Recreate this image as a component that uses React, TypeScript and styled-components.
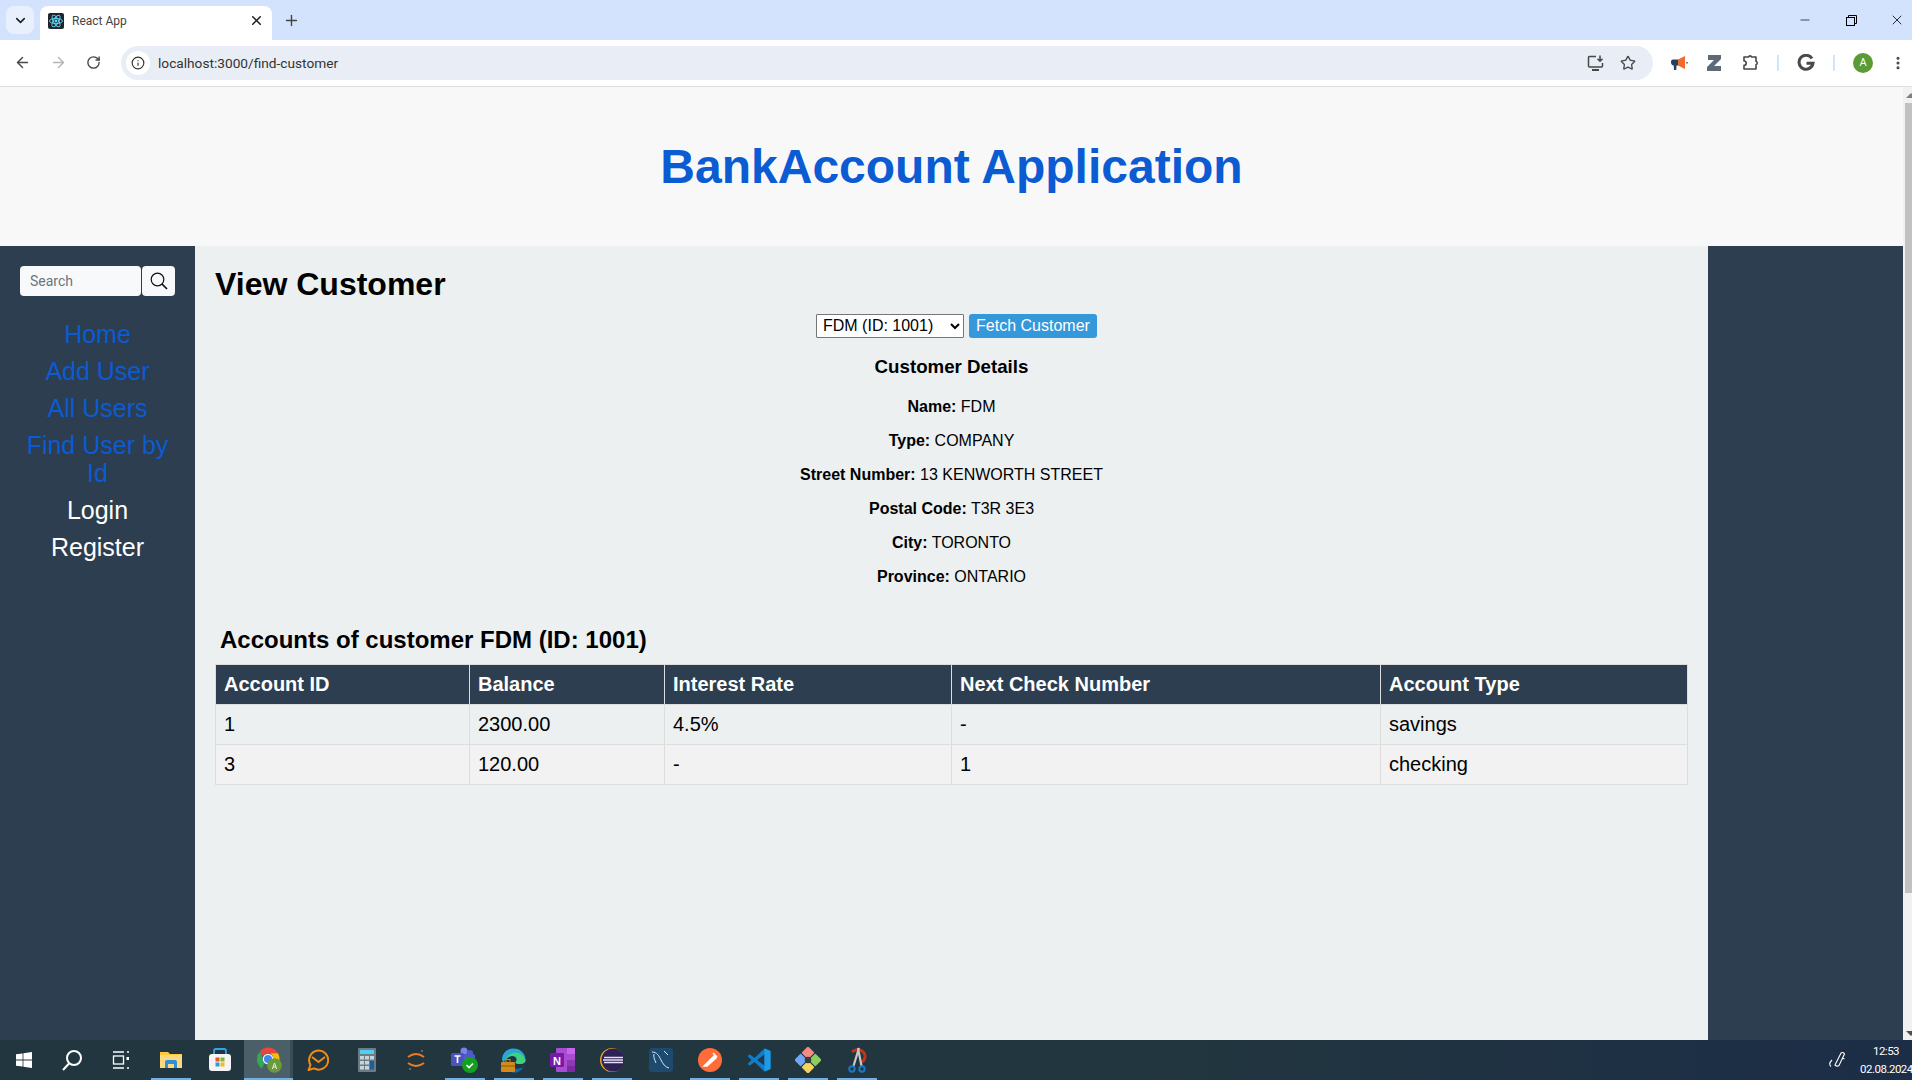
import React from "react";
import styled, { createGlobalStyle } from "styled-components";
import { ArrowLeft, ArrowRight, RotateCw, Info, Star, X, Plus, ChevronDown, EllipsisVertical, Minus } from "lucide-react";

const Global = createGlobalStyle`
  html, body { margin: 0; padding: 0; height: 100%; overflow: hidden; }
  body { font-family: "Liberation Sans", Arial, sans-serif; }
  * { box-sizing: border-box; }
`;

const Screen = styled.div`
  width: 1912px; height: 1080px; display: flex; flex-direction: column; overflow: hidden;
`;
const TabStrip = styled.div`
  height: 40px; background: #d3e3fd; display: flex; align-items: flex-start; position: relative; flex: none;
`;
const TabSearch = styled.div`
  width: 28px; height: 28px; margin: 6px 0 0 6px; border-radius: 8px; background: #e8f0fe;
  display: flex; align-items: center; justify-content: center; color: #1f1f1f;
`;
const Tab = styled.div`
  width: 232px; height: 34px; margin: 6px 0 0 6px; background: #fff; border-radius: 8px 8px 0 0;
  display: flex; align-items: center; padding: 0 8px 5px 8px; gap: 8px;
`;
const TabTitle = styled.span`
  flex: 1; font-family: "Roboto", "Liberation Sans", sans-serif; font-size: 12px; color: #444;
`;
const NewTab = styled.div`
  margin: 10px 0 0 9px; width: 20px; height: 20px; color: #444; display: flex; align-items: center; justify-content: center;
`;
const WindowControls = styled.div`
  margin-left: auto; display: flex; height: 40px; align-items: center; padding-right: 7px; color: #000; gap: 32px;
`;
const MinimizeIcon = styled(Minus)`
  margin-right: 2px;
`;
const Toolbar = styled.div`
  height: 47px; flex: none; background: #fff; border-bottom: 1px solid #e0e0e0; display: flex; align-items: center; padding: 0 0 1px 13px;
`;
const ToolIcon = styled.div<{ $gap?: number; $lead?: number; $w?: number }>`
  display: flex; align-items: center; justify-content: center; width: ${p => p.$w ?? 18}px;
  margin-left: ${p => p.$lead ?? 0}px; margin-right: ${p => p.$gap ?? 0}px; color: #474747; flex: none;
`;
const Omnibox = styled.div`
  margin-left: 19px; width: 1532px; height: 34px; border-radius: 17px; background: #e9eef6;
  display: flex; align-items: center; padding: 0 16px 0 5px; flex: none;
`;
const InfoBadge = styled.div`
  width: 24px; height: 24px; border-radius: 50%; background: #fff; display: flex; align-items: center; justify-content: center; color: #333; margin-right: 8px;
`;
const Url = styled.span`
  flex: 1; font: 13.7px "Roboto", "Liberation Sans", sans-serif; color: #333;
`;
const Divider = styled.div`
  width: 2px; height: 16px; background: #d3e3fd; margin: 0 18px; flex: none;
`;
const Avatar = styled.div`
  width: 20px; height: 20px; border-radius: 50%; background: #5b9a34; color: #fff; font: 11px "Roboto", sans-serif;
  display: flex; align-items: center; justify-content: center; flex: none;
`;
const Viewport = styled.div`
  flex: 1; display: flex; min-height: 0;
`;
const PageArea = styled.div`
  flex: 1; display: flex; flex-direction: column; min-width: 0;
`;
const Scrollbar = styled.div`
  width: 9px; background: #f1f1f1; display: flex; flex-direction: column; align-items: flex-end; position: relative; overflow: hidden;
`;
const ScrollThumb = styled.div`
  width: 7px; height: 790px; margin-top: 16px; background: #c1c1c1;
`;
const ScrollArrow = styled.div<{ $down?: boolean }>`
  position: absolute; ${p => (p.$down ? "bottom: 4px;" : "top: 6px;")} left: 3px; width: 0; height: 0;
  border-left: 5px solid transparent; border-right: 5px solid transparent;
  ${p => (p.$down ? "border-top: 5px solid #505050;" : "border-bottom: 5px solid #808080;")}
`;
const Header = styled.header`
  height: 159px; flex: none; background: #f8f8f8; display: flex; align-items: center; justify-content: center;
`;
const Title = styled.h1`
  margin: 0 0 1px; font-size: 48px; font-weight: 700; color: #0b5bd3;
`;
const Columns = styled.div`
  flex: 1; display: flex; min-height: 0;
`;
const Sidebar = styled.aside`
  width: 195px; flex: none; background: #2c3e50; padding: 20px 20px 0; display: flex; flex-direction: column;
`;
const SearchRow = styled.div`
  display: flex; gap: 1px; height: 30px; margin-bottom: 24px;
`;
const SearchInput = styled.div`
  width: 121px; height: 30px; background: #f8f9fa; border-radius: 4px; color: #6c757d;
  display: flex; align-items: center; padding-left: 10px; font-family: "Roboto", sans-serif; font-size: 14px;
`;
const SearchButton = styled.div`
  width: 33px; height: 30px; background: #f8f9fa; border-radius: 4px; display: flex; align-items: center; justify-content: center; color: #111;
`;
const NavLink = styled.a<{ $light?: boolean }>`
  display: block; text-align: center; font-size: 25px; line-height: 28px; margin-bottom: 9px;
  color: ${p => (p.$light ? "#fff" : "#0b5bd3")}; text-decoration: none;
  &:last-child { margin-bottom: 0; }
`;
const Main = styled.main`
  width: 1513px; flex: none; background: #ecf0f1; padding: 20px 20px 0 20px;
`;
const Heading = styled.h2`
  margin: 0 0 11px; font-size: 32px; line-height: 37px; font-weight: 700; color: #000;
`;
const FetchRow = styled.div`
  display: flex; justify-content: center; align-items: center; gap: 5px; height: 24px; margin-left: 10px;
`;
const CustomerSelect = styled.select`
  width: 148px; height: 24px; font: 16px "Liberation Sans", sans-serif; color: #000; background: #fff;
  border: 1px solid #767676; border-radius: 1px; padding: 0 0 1px 2px;
`;
const FetchButton = styled.button`
  height: 24px; width: 128px; border: 0; padding: 0; border-radius: 3px; background: #3498db; color: #fff; font: 16px "Liberation Sans", sans-serif;
`;
const Details = styled.section`
  text-align: center; width: 1473px;
`;
const DetailsTitle = styled.h3`
  margin: 18px 0 0; font-size: 18.72px; line-height: 21px; color: #000;
`;
const DetailLine = styled.p`
  margin: 16px 0 0; font-size: 16px; line-height: 18px; color: #000;
  &:first-of-type { margin-top: 21px; }
`;
const AccountsTitle = styled.h3`
  margin: 40px 0 10px 5px; font-size: 24px; line-height: 28px; color: #000;
`;
const Table = styled.table`
  width: 1472px; border-collapse: collapse; table-layout: fixed; font-size: 20px;
`;
const Th = styled.th<{ $w: number }>`
  width: ${p => p.$w}px; height: 40px; background: #2c3e50; color: #fff; text-align: left; padding: 0 8px; font-weight: 700; border: 1px solid #ddd;
`;
const Td = styled.td`
  height: 40px; padding: 0 8px; border: 1px solid #ddd; color: #000;
`;
const Tr = styled.tr<{ $alt?: boolean }>`
  background: ${p => (p.$alt ? "#f2f2f2" : "transparent")};
`;
const RightRail = styled.div`
  flex: 1; background: #2c3e50;
`;
const Taskbar = styled.footer`
  height: 40px; flex: none; display: flex;
  background: linear-gradient(90deg, #22363f 0%, #22363f 60%, #1c2d47 100%);
`;
const TaskItem = styled.div<{ $w?: number; $active?: boolean; $open?: boolean }>`
  width: ${p => p.$w ?? 49}px; height: 40px; flex: none; display: flex; align-items: center; justify-content: center; position: relative;
  background: ${p => (p.$active ? "#4a5f68" : "transparent")};
  box-shadow: ${p => (p.$active ? "inset -3px 0 0 #3a4c55" : "none")};
  &::after {
    content: ""; display: ${p => (p.$open ? "block" : "none")}; position: absolute;
    left: ${p => (p.$active ? 0 : 5)}px; right: ${p => (p.$active ? 0 : 4)}px; bottom: 0; height: 2px; background: #6fb1e6;
  }
`;
const Tray = styled.div`
  margin-left: auto; display: flex; align-items: center; gap: 14px; color: #fff; white-space: nowrap;
`;
const Clock = styled.div`
  width: 52px; font: 11.5px/18px "Roboto", "Open Sans", sans-serif; letter-spacing: -0.5px; color: #fff; text-align: center;
`;

const ReactLogo = () => (
  <svg width="16" height="16" viewBox="0 0 16 16"><rect width="16" height="16" rx="2" fill="#20232a" /><g fill="none" stroke="#61dafb" strokeWidth="0.9"><ellipse cx="8" cy="8" rx="6.5" ry="2.6" /><ellipse cx="8" cy="8" rx="6.5" ry="2.6" transform="rotate(60 8 8)" /><ellipse cx="8" cy="8" rx="6.5" ry="2.6" transform="rotate(120 8 8)" /></g><circle cx="8" cy="8" r="1.4" fill="#61dafb" /></svg>
);
const RestoreIcon = () => (
  <svg width="11" height="11" viewBox="0 0 11 11" fill="none" stroke="#000" strokeWidth="1"><rect x="0.500" y="2.500" width="8" height="8" /><path d="M2.500 2.500V.5h8v8H8.500" /></svg>
);
const InstallIcon = () => (
  <svg width="17" height="16" viewBox="0 0 17 16" fill="none" stroke="#474747" strokeWidth="1.500"><path d="M9 1.500H2.500a1 1 0 0 0-1 1v8.500a1 1 0 0 0 1 1h12a1 1 0 0 0 1-1V8" /><path d="M5 15h7" strokeWidth="2" /><path d="M13 .5v5.500M10.500 3.800 13 6.300l2.500-2.500" /></svg>
);
const Megaphone = () => (
  <svg width="18" height="18" viewBox="0 0 18 18"><path d="M1 7.500c0-1.200 1-2 2-2h5v6H6.500L6.300 16H4l-.3-4.500C2 11.500 1 10 1 8.500z" fill="#24405f" /><path d="M8 5.500 15 2v13l-7-3.500z" fill="#f4692e" /><rect x="16" y="8" width="2" height="1.500" fill="#777" /></svg>
);
const ZExt = () => (
  <svg width="14" height="16" viewBox="0 0 14 16"><path d="M1 0h13v4l-7 7h7v5H0v-4l7-7H1z" fill="#5c6b77" /></svg>
);
const PuzzleIcon = () => (
  <svg width="18" height="18" viewBox="0 0 18 18" fill="none" stroke="#474747" strokeWidth="1.600"><path d="M3 3h4.500a1.700 1.700 0 0 1 3.200 0H15v4.300a1.800 1.800 0 0 1 0 3.400V15H3v-3.600a2 2 0 0 0 0-4.400z" strokeLinejoin="round" /></svg>
);
const GIcon = () => (
  <svg width="18" height="18" viewBox="0 0 18 18" fill="none" stroke="#4a4a4a" strokeWidth="3"><path d="M15 4.500A7 7 0 1 0 16 9.300H9.500" /></svg>
);
const BiSearch = () => (
  <svg width="18" height="18" viewBox="0 0 18 18" fill="none" stroke="#111" strokeWidth="1.200"><circle cx="7.500" cy="7.500" r="6.300" /><path d="M12 12l5 5" strokeWidth="1.700" /></svg>
);
const WinLogo = () => (
  <svg width="16" height="16" viewBox="0 0 16 16" fill="#fff"><path d="M0 2.300 6.600 1.400v6.200H0zM7.400 1.300 16 0v7.600H7.400zM0 8.400h6.600v6.200L0 13.700zM7.400 8.400H16V16l-8.600-1.200z" /></svg>
);
const SearchGlyph = () => (
  <svg width="22" height="22" viewBox="0 0 22 22" fill="none" stroke="#fff" strokeWidth="2"><circle cx="13" cy="9" r="7" /><path d="M8 14.500 2 21" /></svg>
);
const TaskView = () => (
  <svg width="18" height="18" viewBox="0 0 18 18" fill="none" stroke="#fff" strokeWidth="1.300"><path d="M1 1h11M1 17h11" /><rect x="1.500" y="5" width="10" height="8" /><rect x="14.500" y="6" width="2.500" height="3" fill="#fff" stroke="none" /><path d="M15 1h2" /><path d="M15 17h2" /></svg>
);
const Folder = () => (
  <svg width="22" height="20" viewBox="0 0 22 20"><path d="M0 2h8l2 2h12v14H0z" fill="#ffc83d" /><path d="M0 5h22v13H0z" fill="#fcd980" /><path d="M5 18v-6q0-2 2-2h8q2 0 2 2v6h-3v-4H8v4z" fill="#2e8fd5" /></svg>
);
const Store = () => (
  <svg width="24" height="24" viewBox="0 0 24 24"><path d="M6 7V3q0-2 2-2h8q2 0 2 2v4" fill="none" stroke="#2ea8e6" strokeWidth="1.800" /><rect x="1" y="6" width="22" height="17" rx="3" fill="#f4f4f4" /><rect x="7.500" y="9.500" width="4" height="4" fill="#e8532b" /><rect x="12.500" y="9.500" width="4" height="4" fill="#7db928" /><rect x="7.500" y="14.500" width="4" height="4" fill="#2a9fe0" /><rect x="12.500" y="14.500" width="4" height="4" fill="#f6b91e" /></svg>
);
const ChromeIcon = () => (
  <svg width="26" height="26" viewBox="0 0 26 26"><path d="M12 0.500a11.500 11.500 0 0 1 10 5.800H12a5.700 5.700 0 0 0-5.200 3.300L3.800 4.400A11.500 11.500 0 0 1 12 .5z" fill="#e8453c" /><path d="M3.800 4.400 8.800 15.400 5.800 21.500A11.500 11.500 0 0 1 3.800 4.400z" fill="#35a853" /><path d="M22 6.300a11.500 11.500 0 0 1-8 17L17 12a5.700 5.700 0 0 0-3-5.700z" fill="#fbbc05" /><circle cx="12" cy="12" r="5.200" fill="#fff" /><circle cx="12" cy="12" r="4" fill="#4285f4" /><circle cx="18.500" cy="18.500" r="7.300" fill="#6a9a3c" /><path d="M16.300 22l2.200-6 2.200 6M17 20h3" stroke="#e8f0d8" strokeWidth="1" fill="none" /></svg>
);
const EmClient = () => (
  <svg width="22" height="22" viewBox="0 0 22 22" fill="none" stroke="#f28c13" strokeWidth="2"><path d="M3.500 16A9.500 9.500 0 1 1 7 19.400L1.500 21z" strokeLinejoin="round" /><path d="M5 8l6.500 5L18 8" /></svg>
);
const Calc = () => (
  <svg width="18" height="24" viewBox="0 0 18 24"><rect width="18" height="24" rx="1" fill="#6d7b84" /><rect x="2" y="2" width="14" height="4" fill="#4fd0ee" /><g fill="#c6d4dc"><rect x="2" y="8" width="4" height="3.500" /><rect x="7" y="8" width="4" height="3.500" /><rect x="12" y="8" width="4" height="3.500" /><rect x="2" y="13" width="4" height="3.500" /><rect x="7" y="13" width="4" height="3.500" /><rect x="2" y="18" width="4" height="3.500" /><rect x="7" y="18" width="4" height="3.500" /></g><rect x="12" y="13" width="4" height="8.500" fill="#1c5f9c" /></svg>
);
const SyncIcon = () => (
  <svg width="18" height="24" viewBox="0 0 18 24" fill="none" stroke="#f07a20" strokeWidth="2"><path d="M1 9q8-6 16 0" /><path d="M1 15q8 6 16 0" /><circle cx="15" cy="3" r="1" fill="#777" stroke="none" /><circle cx="3" cy="21" r="1" fill="#777" stroke="none" /></svg>
);
const Teams = () => (
  <svg width="27" height="26" viewBox="0 0 27 26"><circle cx="13" cy="4" r="3.500" fill="#7b83eb" /><circle cx="19" cy="6" r="3" fill="#5059c9" /><rect x="12" y="7" width="12" height="11" rx="2" fill="#5059c9" /><rect x="0" y="6" width="13" height="13" rx="1.500" fill="#4b53bc" /><path d="M3.500 9h6M6.500 9v7" stroke="#fff" strokeWidth="1.700" /><circle cx="19" cy="18" r="8" fill="#14a01f" /><path d="M15.500 18l2.500 2.500 4-4" stroke="#fff" strokeWidth="1.700" fill="none" /></svg>
);
const Edge = () => (
  <svg width="25" height="25" viewBox="0 0 25 25"><path d="M1 12C1 5 6 .5 12.500.5 19 .5 24.500 5 24.500 12c0 3-3 4-6 4-3 0-4-1-4-2 2-1 2-6-3-6C6 8 3 12 3 15z" fill="#2aa5d8" /><path d="M24.500 12c-2-6-8-9-13-7C7 7 4 10 3 15c0 0 2-7 8.500-7 5 0 5 5 3 6 0 1 1 2 4 2s6-1 6-4z" fill="#3ed27a" /><path d="M10 24c5 2 11-1 12-5-3 2-7 2-10 1z" fill="#1565b5" /><rect x="0" y="14" width="14" height="10" rx="1" fill="#d38a1b" /><path d="M0 18h14" stroke="#8c5a10" /><rect x="5" y="11.500" width="4" height="3" fill="none" stroke="#d38a1b" /></svg>
);
const OneNote = () => (
  <svg width="25" height="24" viewBox="0 0 25 24"><rect x="6" y="0" width="19" height="24" rx="1" fill="#a94cd1" /><rect x="17" y="0" width="8" height="6" fill="#ca64ea" /><rect x="17" y="12" width="8" height="6" fill="#8f3ab3" /><rect x="17" y="18" width="8" height="6" fill="#7b2aa0" /><rect x="0" y="5" width="14" height="14" rx="1" fill="#7719aa" /><text x="7" y="16.500" fontSize="11" fontWeight="700" fill="#fff" textAnchor="middle" fontFamily="Liberation Sans">N</text></svg>
);
const Eclipse = () => (
  <svg width="24" height="24" viewBox="0 0 24 24"><circle cx="12" cy="12" r="12" fill="#f2a12a" /><circle cx="13" cy="12" r="11.500" fill="#2c2255" /><path d="M4 9.500h19M3 12h20M4 14.500h19" stroke="#e6e0f5" strokeWidth="1.400" /></svg>
);
const MySql = () => (
  <svg width="24" height="24" viewBox="0 0 24 24"><rect width="24" height="24" rx="3" fill="#1f4a70" /><path d="M3 4c5 0 7 4 9 8s4 7 8 8M5 6c-1 3 1 6 2 9M15 3l4 4" stroke="#dce8f0" strokeWidth="1" fill="none" /></svg>
);
const Postman = () => (
  <svg width="24" height="24" viewBox="0 0 24 24"><circle cx="12" cy="12" r="12" fill="#ff6c37" /><path d="M6 18 16 8l2 2-9 8zM15 5l4 4" stroke="#fff" strokeWidth="1.500" fill="#fff" /></svg>
);
const VSCode = () => (
  <svg width="24" height="24" viewBox="0 0 24 24"><path d="M17.500 0.500 7.500 10 3 6.500 0.500 8l4 4-4 4L3 17.500 7.500 14l10 9.500 6-2.500V3z" fill="#0e7fcc" /><path d="M17.500 6.500 10 12l7.500 5.500z" fill="#22394a" /><path d="M17.500 0.500 23.500 3v18l-6 2.500z" fill="#1f9ce8" /></svg>
);
const GitKraken = () => (
  <svg width="26" height="26" viewBox="0 0 24 24"><g transform="rotate(45 12 12)"><rect x="3" y="3" width="8.500" height="8.500" rx="1" fill="#f28b82" /><rect x="12.500" y="3" width="8.500" height="8.500" rx="1" fill="#8bcf5f" /><rect x="3" y="12.500" width="8.500" height="8.500" rx="1" fill="#6fa8f5" /><rect x="12.500" y="12.500" width="8.500" height="8.500" rx="1" fill="#f4d35e" /></g><circle cx="12" cy="12" r="3" fill="#3a3a3a" /></svg>
);
const Snip = () => (
  <svg width="20" height="26" viewBox="0 0 20 26"><path d="M5 5a8 8 0 0 1 12 1c2 3 1 7-2 9" fill="none" stroke="#c4341b" strokeWidth="3" /><path d="M12 1 6.500 19M11 1l3.500 18" stroke="#c9c9c9" strokeWidth="2.200" /><circle cx="5" cy="22" r="2.700" fill="none" stroke="#1778c8" strokeWidth="2" /><circle cx="15" cy="22" r="2.700" fill="none" stroke="#1778c8" strokeWidth="2" /></svg>
);
const PenTray = () => (
  <svg width="18" height="18" viewBox="0 0 18 18" fill="none" stroke="#fff" strokeWidth="1.100"><path d="M7 14 13 2q2-1.500 3.500 1L11 14.500q-2 1.500-4-.5zM4 9q-4 4-1 6.500M14 7l2.500 1" /></svg>
);

const accounts = [
  { id: "1", balance: "2300.00", rate: "4.5%", next: "-", type: "savings" },
  { id: "3", balance: "120.00", rate: "-", next: "1", type: "checking" },
];
const details: [string, string][] = [
  ["Name:", "FDM"], ["Type:", "COMPANY"], ["Street Number:", "13 KENWORTH STREET"],
  ["Postal Code:", "T3R 3E3"], ["City:", "TORONTO"], ["Province:", "ONTARIO"],
];
const task: { el: React.ReactNode; w?: number; open?: boolean; active?: boolean }[] = [
  { el: <WinLogo />, w: 48 }, { el: <SearchGlyph />, w: 48 }, { el: <TaskView />, w: 50 },
  { el: <Folder />, open: true }, { el: <Store /> }, { el: <ChromeIcon />, open: true, active: true },
  { el: <EmClient />, w: 50 }, { el: <Calc />, w: 48 }, { el: <SyncIcon /> }, { el: <Teams />, open: true },
  { el: <Edge />, open: true }, { el: <OneNote />, open: true }, { el: <Eclipse />, open: true },
  { el: <MySql /> }, { el: <Postman />, open: true }, { el: <VSCode />, open: true },
  { el: <GitKraken />, open: true }, { el: <Snip />, open: true },
];

export default function App() {
  return (
    <Screen>
      <Global />
      <TabStrip>
        <TabSearch><ChevronDown size={15} strokeWidth={2.5} /></TabSearch>
        <Tab>
          <ReactLogo />
          <TabTitle>React App</TabTitle>
          <X size={15} strokeWidth={2.5} color="#222" />
        </Tab>
        <NewTab><Plus size={17} strokeWidth={2} /></NewTab>
        <WindowControls>
          <MinimizeIcon size={14} strokeWidth={1.2} />
          <RestoreIcon />
          <X size={16} strokeWidth={1.2} />
        </WindowControls>
      </TabStrip>
      <Toolbar>
        <ToolIcon $gap={18}><ArrowLeft size={17} strokeWidth={2} /></ToolIcon>
        <ToolIcon $gap={17}><ArrowRight size={17} strokeWidth={2} color="#b5b5b5" /></ToolIcon>
        <ToolIcon><RotateCw size={15} strokeWidth={2.2} /></ToolIcon>
        <Omnibox>
          <InfoBadge><Info size={14} strokeWidth={2} /></InfoBadge>
          <Url>localhost:3000/find-customer</Url>
          <ToolIcon $gap={15}><InstallIcon /></ToolIcon>
          <ToolIcon><Star size={16} strokeWidth={2} /></ToolIcon>
        </Omnibox>
        <ToolIcon $gap={17} $lead={17}><Megaphone /></ToolIcon>
        <ToolIcon $gap={18}><ZExt /></ToolIcon>
        <ToolIcon><PuzzleIcon /></ToolIcon>
        <Divider />
        <ToolIcon><GIcon /></ToolIcon>
        <Divider />
        <Avatar>A</Avatar>
        <ToolIcon $lead={16}><EllipsisVertical size={16} strokeWidth={2.6} /></ToolIcon>
      </Toolbar>
      <Viewport>
        <PageArea>
          <Header><Title>BankAccount Application</Title></Header>
          <Columns>
            <Sidebar>
              <SearchRow>
                <SearchInput>Search</SearchInput>
                <SearchButton><BiSearch /></SearchButton>
              </SearchRow>
              <NavLink>Home</NavLink>
              <NavLink>Add User</NavLink>
              <NavLink>All Users</NavLink>
              <NavLink>Find User by Id</NavLink>
              <NavLink $light>Login</NavLink>
              <NavLink $light>Register</NavLink>
            </Sidebar>
            <Main>
              <Heading>View Customer</Heading>
              <FetchRow>
                <CustomerSelect defaultValue="1001">
                  <option value="1001">FDM (ID: 1001)</option>
                </CustomerSelect>
                <FetchButton>Fetch Customer</FetchButton>
              </FetchRow>
              <Details>
                <DetailsTitle>Customer Details</DetailsTitle>
                {details.map(([k, v]) => (
                  <DetailLine key={k}><strong>{k}</strong> {v}</DetailLine>
                ))}
              </Details>
              <AccountsTitle>Accounts of customer FDM (ID: 1001)</AccountsTitle>
              <Table>
                <thead>
                  <tr>
                    <Th $w={254}>Account ID</Th>
                    <Th $w={195}>Balance</Th>
                    <Th $w={287}>Interest Rate</Th>
                    <Th $w={429}>Next Check Number</Th>
                    <Th $w={307}>Account Type</Th>
                  </tr>
                </thead>
                <tbody>
                  {accounts.map((a, i) => (
                    <Tr key={a.id} $alt={i === 1}>
                      <Td>{a.id}</Td><Td>{a.balance}</Td><Td>{a.rate}</Td><Td>{a.next}</Td><Td>{a.type}</Td>
                    </Tr>
                  ))}
                </tbody>
              </Table>
            </Main>
            <RightRail />
          </Columns>
        </PageArea>
        <Scrollbar>
          <ScrollArrow />
          <ScrollThumb />
          <ScrollArrow $down />
        </Scrollbar>
      </Viewport>
      <Taskbar>
        {task.map((t, i) => (
          <TaskItem key={i} $w={t.w} $open={t.open} $active={t.active}>{t.el}</TaskItem>
        ))}
        <Tray>
          <PenTray />
          <Clock>12:53<br />02.08.2024</Clock>
        </Tray>
      </Taskbar>
    </Screen>
  );
}
